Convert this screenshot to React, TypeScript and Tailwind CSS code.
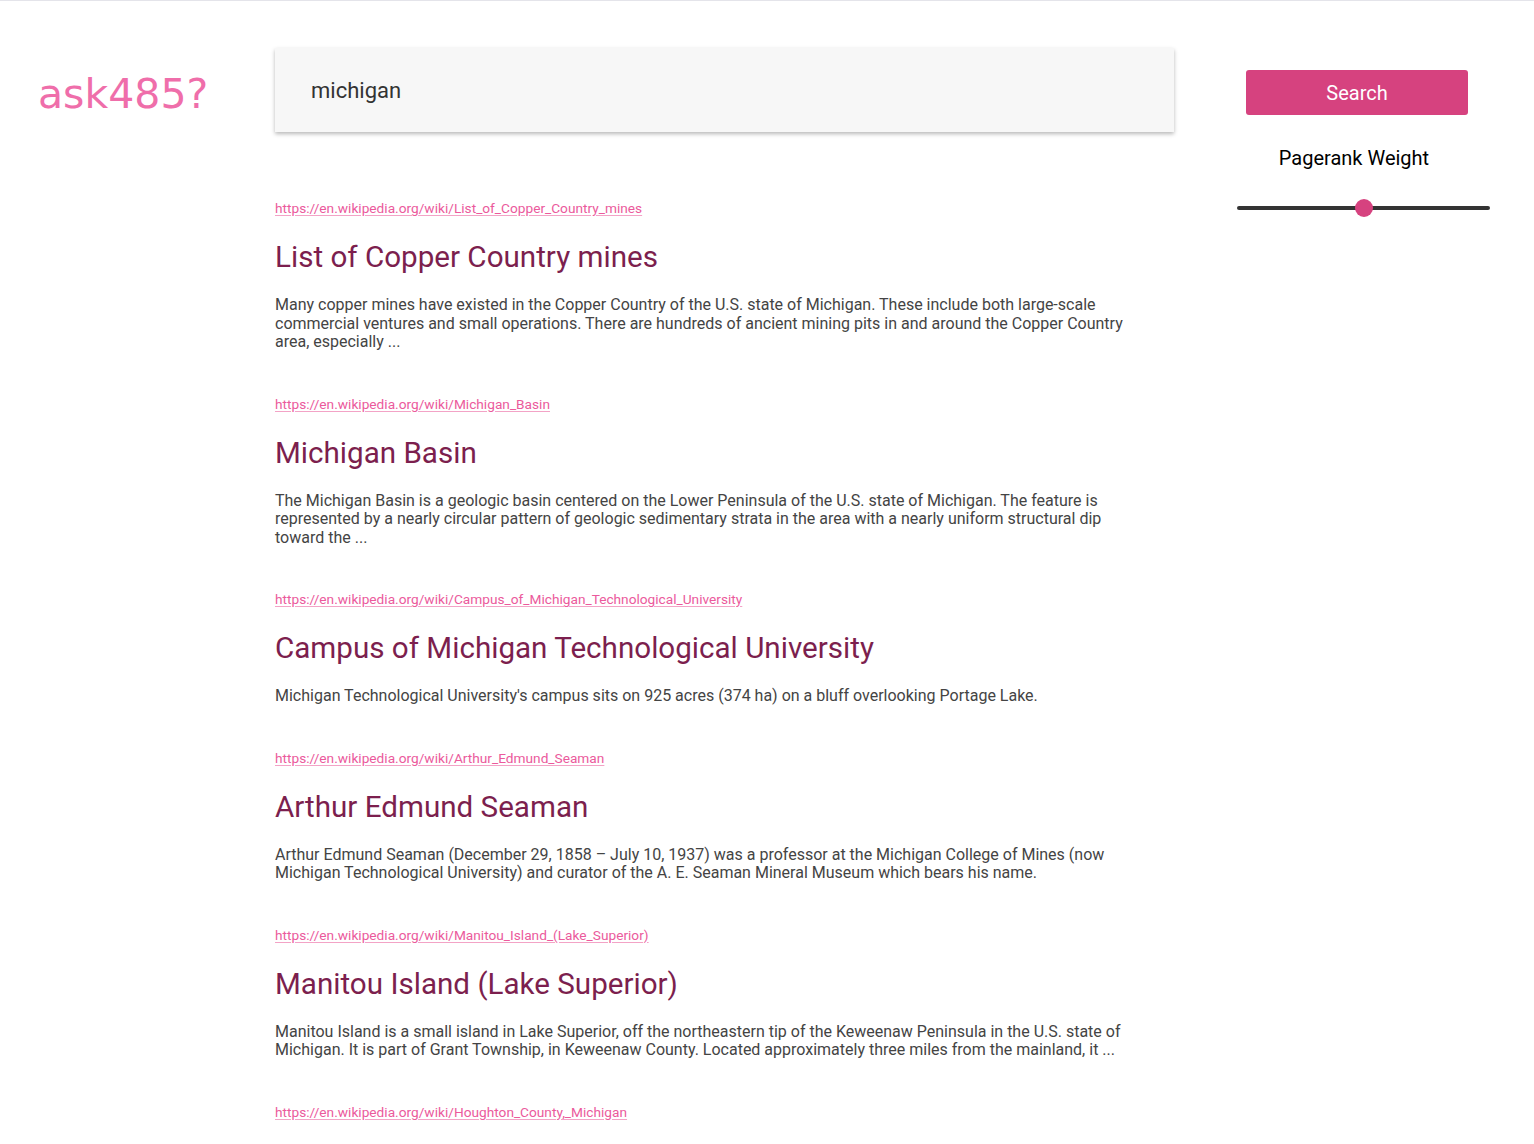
import React from "react";

type Result = {
  url: string;
  title: string;
  snippet: string;
};

const results: Result[] = [
  {
    url: "https://en.wikipedia.org/wiki/List_of_Copper_Country_mines",
    title: "List of Copper Country mines",
    snippet:
      "Many copper mines have existed in the Copper Country of the U.S. state of Michigan. These include both large-scale commercial ventures and small operations. There are hundreds of ancient mining pits in and around the Copper Country area, especially ...",
  },
  {
    url: "https://en.wikipedia.org/wiki/Michigan_Basin",
    title: "Michigan Basin",
    snippet:
      "The Michigan Basin is a geologic basin centered on the Lower Peninsula of the U.S. state of Michigan. The feature is represented by a nearly circular pattern of geologic sedimentary strata in the area with a nearly uniform structural dip toward the ...",
  },
  {
    url: "https://en.wikipedia.org/wiki/Campus_of_Michigan_Technological_University",
    title: "Campus of Michigan Technological University",
    snippet:
      "Michigan Technological University's campus sits on 925 acres (374 ha) on a bluff overlooking Portage Lake.",
  },
  {
    url: "https://en.wikipedia.org/wiki/Arthur_Edmund_Seaman",
    title: "Arthur Edmund Seaman",
    snippet:
      "Arthur Edmund Seaman (December 29, 1858 – July 10, 1937) was a professor at the Michigan College of Mines (now Michigan Technological University) and curator of the A. E. Seaman Mineral Museum which bears his name.",
  },
  {
    url: "https://en.wikipedia.org/wiki/Manitou_Island_(Lake_Superior)",
    title: "Manitou Island (Lake Superior)",
    snippet:
      "Manitou Island is a small island in Lake Superior, off the northeastern tip of the Keweenaw Peninsula in the U.S. state of Michigan. It is part of Grant Township, in Keweenaw County. Located approximately three miles from the mainland, it ...",
  },
  {
    url: "https://en.wikipedia.org/wiki/Houghton_County,_Michigan",
    title: "Houghton County, Michigan",
    snippet:
      "Houghton County is a county in the Upper Peninsula of the U.S. state of Michigan.",
  },
];

const ResultItem = ({ result }: { result: Result }) => (
  <div className="mb-[44px]">
    <a
      href={result.url}
      className="block text-[13.7px] leading-[16px] text-[#eb5a9c] underline decoration-[#f3a3c6] underline-offset-2"
    >
      {result.url}
    </a>
    <h2 className="mt-[23px] text-[29.6px] leading-[36px] text-[#7c1f4e]">
      {result.title}
    </h2>
    <p className="mt-[21px] w-[850px] text-[16px] leading-[18.5px] text-[#444444]">
      {result.snippet}
    </p>
  </div>
);

const App = () => {
  return (
    <div className="h-screen overflow-hidden bg-white border-t border-[#e4e4ea] font-['Roboto',sans-serif]">
      <div className="flex">
        <div className="w-[275px] shrink-0 pl-[38px] pt-[68px]">
          <span className="font-['DejaVu_Sans',sans-serif] text-[41px] leading-[50px] text-[#ef6eaa]">
            ask485?
          </span>
        </div>

        <div className="w-[899px] shrink-0 pt-[47px]">
          <div className="h-[84px] bg-[#f7f7f7] shadow-[0_2px_4px_rgba(0,0,0,0.28)] flex items-center px-9">
            <span className="text-[22px] text-[#333333]">michigan</span>
          </div>

          <div className="mt-[68px]">
            {results.map((r) => (
              <ResultItem key={r.url} result={r} />
            ))}
          </div>
        </div>

        <div className="flex-1 pt-[69px]">
          <div className="flex flex-col items-center">
            <button className="ml-[6px] h-[45px] w-[222px] rounded-[3px] bg-[#d6427f] text-[20px] text-white">
              Search
            </button>
            <div className="mt-[30px] text-[20px] leading-[26px] text-black">
              Pagerank Weight
            </div>
          </div>
          <div className="relative mt-[35px] ml-[63px] w-[253px] h-[4px] rounded-full bg-[#333333]">
            <div className="absolute left-[118px] top-[-7px] h-[18px] w-[18px] rounded-full bg-[#d6427f]" />
          </div>
        </div>
      </div>
    </div>
  );
};

export default App;
